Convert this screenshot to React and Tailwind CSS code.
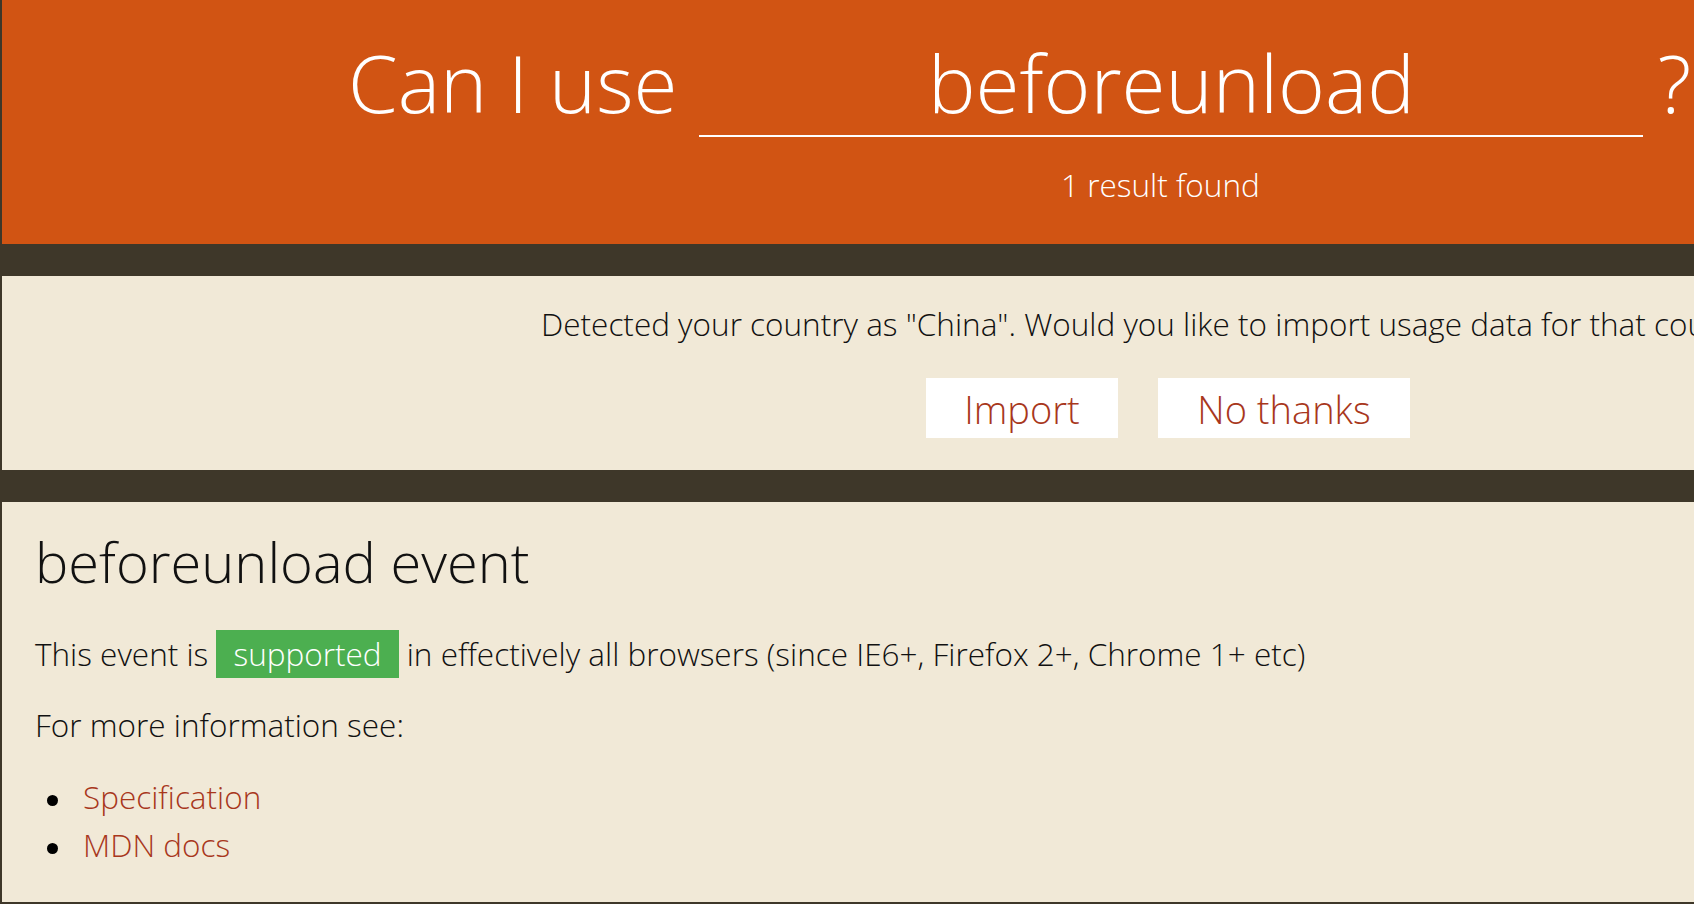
import React from "react";

const links = ["Specification", "MDN docs"];

const App = () => {
  return (
    <div
      className="w-[1694px] h-[904px] overflow-hidden bg-[#3e3729] pl-[2px] font-light text-[#111]"
      style={{ fontFamily: '"Open Sans", "Noto Sans", sans-serif' }}
    >
      <div className="w-[2336px]">
        {/* header */}
        <header className="h-[244px] bg-[#d15413] text-white">
          <div className="flex items-start pl-[346px] pt-[42px]">
            <h1 className="text-[80px] leading-none font-light whitespace-nowrap">
              Can I use
            </h1>
            <div className="ml-[22px] w-[944px] flex flex-col items-center">
              <div className="w-full border-b-2 border-white pb-[13px] text-center text-[80px] leading-none">
                beforeunload
              </div>
              <div className="mt-[32px] mr-[22px] text-[31.5px] leading-none">
                1 result found
              </div>
            </div>
            <span className="ml-[14px] text-[80px] leading-none">?</span>
          </div>
        </header>

        <div className="h-[32px]" />

        {/* country notice */}
        <section className="h-[194px] bg-[#f1e9d7] pt-[32px] pl-[539px]">
          <p className="text-[31.5px] leading-none whitespace-nowrap">
            Detected your country as "China". Would you like to import usage
            data for that country?
          </p>
          <div className="mt-[38px] flex gap-[40px] pl-[385px]">
            <button className="w-[192px] h-[60px] bg-white pt-[3px] text-[38px] leading-none font-light text-[#a8371c]">
              Import
            </button>
            <button className="w-[252px] h-[60px] bg-white pt-[3px] text-[38px] leading-none font-light text-[#a8371c]">
              No thanks
            </button>
          </div>
        </section>

        <div className="h-[32px]" />

        {/* feature */}
        <section className="h-[400px] bg-[#f1e9d7] pt-[31px] pl-[33px]">
          <h2 className="text-[56px] leading-none font-light">
            beforeunload event
          </h2>
          <p className="mt-[41px] text-[31.5px] leading-none whitespace-nowrap">
            This event is{" "}
            <span className="inline-block bg-[#4caf50] px-[17px] py-[8px] text-white leading-none">
              supported
            </span>{" "}
            in effectively all browsers (since IE6+, Firefox 2+, Chrome 1+ etc)
          </p>
          <p className="mt-[31px] text-[31.5px] leading-none">
            For more information see:
          </p>
          <ul className="mt-[33px]">
            {links.map((l) => (
              <li
                key={l}
                className="flex items-center text-[31.5px] leading-[48px]"
              >
                <span className="ml-[12px] mr-[25px] mt-[7px] w-[11px] h-[11px] rounded-full bg-black" />
                <a href="#" className="text-[#a8371c]">
                  {l}
                </a>
              </li>
            ))}
          </ul>
        </section>
      </div>
    </div>
  );
};

export default App;
